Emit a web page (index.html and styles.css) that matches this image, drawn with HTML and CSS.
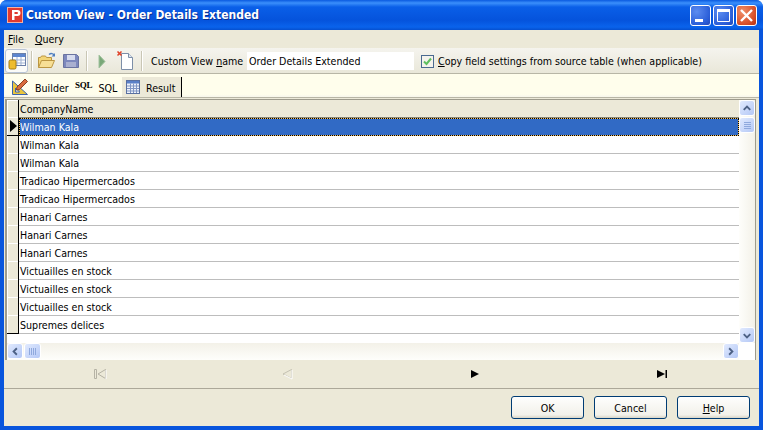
FILE: index.html
```html
<!DOCTYPE html>
<html lang="en">
<head>
<meta charset="utf-8">
<title>Custom View - Order Details Extended</title>
<link rel="stylesheet" href="styles.css">
</head>
<body>
<div class="window">
  <header class="titlebar">
    <svg class="app-icon" width="16" height="16" viewBox="0 0 16 16"><rect x="0.5" y="0.5" width="15" height="15" fill="#e03a30" stroke="#f4b0a0"/><path d="M5 3h5.500a2.500 2.500 0 0 1 0 6H7.500v4H5zM7.500 5v2h2.500a1 1 0 0 0 0-2z" fill="#fff"/></svg>
    <span class="title-text">Custom View - Order Details Extended</span>
    <div class="caption-buttons">
      <span class="cap cap-blue"><svg width="21" height="21" viewBox="0 0 21 21"><rect x="5" y="14" width="8" height="3" fill="#fff"/></svg></span>
      <span class="cap cap-blue"><svg width="21" height="21" viewBox="0 0 21 21"><path d="M4.500 4.500h12v12h-12z" fill="none" stroke="#fff"/><rect x="4" y="4" width="13" height="3" fill="#fff"/></svg></span>
      <span class="cap cap-red"><svg width="21" height="21" viewBox="0 0 21 21"><path d="M5 5l11 11M16 5L5 16" stroke="#fff" stroke-width="2.400"/></svg></span>
    </div>
  </header>
  <div class="client">
    <nav class="menubar"><span class="menu"><u>F</u>ile</span><span class="menu"><u>Q</u>uery</span></nav>
    <div class="toolbar">
      <span class="tool tool-active">
        <svg width="20" height="20" viewBox="0 0 20 20"><rect x="5.500" y="2.500" width="13" height="12" fill="#fff" stroke="#6a7fa8"/><rect x="6" y="3" width="12" height="3" fill="#5d86cf"/><path d="M6 9h12M6 12h12M10 6v8M14 6v8" stroke="#9fb2d2"/><rect x="2" y="9" width="7" height="9" rx="1.500" fill="#eebc2e" stroke="#a67c14"/></svg>
      </span>
      <span class="sep"></span>
      <span class="tool">
        <svg width="20" height="20" viewBox="0 0 20 20"><path d="M1.500 16.500V6.500h2l1-1.500h4l1 1.500h5v3" fill="#f3d576" stroke="#bb9642"/><path d="M1.500 16.500l3-7h13l-3 7z" fill="#f7df95" stroke="#bb9642"/><path d="M12 3.500c2-1.500 4-1 5 .5" fill="none" stroke="#4f7fc0" stroke-width="1.500"/><path d="M18 2v3.500h-3.500z" fill="#4f7fc0"/></svg>
      </span>
      <span class="tool">
        <svg width="20" height="20" viewBox="0 0 20 20"><path d="M2.500 3.500h13l2 2v11h-15z" fill="#7d88bd" stroke="#6a73a0"/><rect x="6" y="4" width="8" height="5" fill="#d7dcef"/><rect x="5" y="11" width="10" height="5" fill="#a9afd0"/></svg>
      </span>
      <span class="sep"></span>
      <span class="tool">
        <svg width="20" height="20" viewBox="0 0 20 20"><path d="M7 4l6 6.500-6 6.500z" fill="#79a878" stroke="#a3c3a0"/></svg>
      </span>
      <span class="tool">
        <svg width="20" height="20" viewBox="0 0 20 20"><path d="M5.500 2.500h7l4 4v12h-11z" fill="#fff" stroke="#7d8fa8"/><path d="M12.500 2.500v4h4" fill="#dfe7f1" stroke="#7d8fa8"/><path d="M1.500 0.500l4 4M5.500 0.500l-4 4" stroke="#e0432a" stroke-width="1.500"/></svg>
      </span>
      <span class="sep sep-last"></span>
      <label class="name-label">Custom View <u>n</u>ame</label>
      <span class="name-field">Order Details Extended</span>
      <span class="check"><svg width="13" height="13" viewBox="0 0 13 13"><path d="M3 6.500l2.500 2.500L10 3.500" fill="none" stroke="#5fbf5f" stroke-width="2"/></svg></span>
      <span class="check-label"><u>C</u>opy field settings from source table (when applicable)</span>
    </div>
    <div class="tabbar">
      <span class="tab tab-builder">
        <svg width="18" height="18" viewBox="0 0 18 18"><path d="M0.500 4v13.500h15z" fill="#e9c53c" stroke="#3a62ad"/><path d="M3.500 11v4h4z" fill="#fff9d8" stroke="#3a62ad"/><path d="M5 10L13 2l2.500 2.500-8 8-3 .5z" fill="#d96b3d" stroke="#8a4022"/></svg>
        <span class="tab-label">Builder</span>
      </span>
      <span class="tab tab-sql"><b class="sql-logo">SQL</b><span class="tab-label">SQL</span></span>
      <span class="tab tab-result">
        <svg width="16" height="16" viewBox="0 0 16 16"><rect x="1.500" y="1.500" width="13" height="13" fill="#eef2fa" stroke="#5a70a0"/><rect x="2" y="2" width="12" height="2.500" fill="#5a80c8"/><path d="M2 7h12M2 9.500h12M2 12h12M5.500 4.500V14M8.500 4.500V14M11.500 4.500V14" stroke="#7f95c4"/></svg>
        <span class="tab-label">Result</span>
      </span>
      <span class="tab-end"></span>
    </div>
    <div class="grid-frame">
      <div class="grid-main">
        <div class="grid-area">
          <div class="row header"><span class="ind"></span><span class="cell">CompanyName</span></div>
          <div class="row selected"><span class="ind"><i class="arrow"></i></span><span class="cell">Wilman Kala</span></div>
          <div class="row"><span class="ind"></span><span class="cell">Wilman Kala</span></div>
          <div class="row"><span class="ind"></span><span class="cell">Wilman Kala</span></div>
          <div class="row"><span class="ind"></span><span class="cell">Tradicao Hipermercados</span></div>
          <div class="row"><span class="ind"></span><span class="cell">Tradicao Hipermercados</span></div>
          <div class="row"><span class="ind"></span><span class="cell">Hanari Carnes</span></div>
          <div class="row"><span class="ind"></span><span class="cell">Hanari Carnes</span></div>
          <div class="row"><span class="ind"></span><span class="cell">Hanari Carnes</span></div>
          <div class="row"><span class="ind"></span><span class="cell">Victuailles en stock</span></div>
          <div class="row"><span class="ind"></span><span class="cell">Victuailles en stock</span></div>
          <div class="row"><span class="ind"></span><span class="cell">Victuailles en stock</span></div>
          <div class="row"><span class="ind"></span><span class="cell">Supremes delices</span></div>
        </div>
        <div class="vscroll">
          <span class="sb-btn"><svg width="15" height="15" viewBox="0 0 15 15"><path d="M4 9l3.500-3.500L11 9" fill="none" stroke="#4d6185" stroke-width="2"/></svg></span>
          <span class="sb-thumb sb-thumb-v"><svg width="9" height="9" viewBox="0 0 9 9"><path d="M1 1.500h7M1 3.500h7M1 5.500h7M1 7.500h7" stroke="#8fa9dd"/></svg></span>
          <span class="sb-fill"></span>
          <span class="sb-btn"><svg width="15" height="15" viewBox="0 0 15 15"><path d="M4 6l3.500 3.500L11 6" fill="none" stroke="#4d6185" stroke-width="2"/></svg></span>
        </div>
      </div>
      <div class="hscroll">
        <span class="sb-btn sb-btn-h"><svg width="15" height="15" viewBox="0 0 15 15"><path d="M9.500 4L6 7.500l3.500 3.500" fill="none" stroke="#4d6185" stroke-width="2"/></svg></span>
        <span class="sb-thumb sb-thumb-h"><svg width="9" height="9" viewBox="0 0 9 9"><path d="M1.500 1v7M3.500 1v7M5.500 1v7M7.500 1v7" stroke="#8fa9dd"/></svg></span>
        <span class="sb-fill"></span>
        <span class="sb-btn sb-btn-h"><svg width="15" height="15" viewBox="0 0 15 15"><path d="M5.500 4L9 7.500 5.500 11" fill="none" stroke="#4d6185" stroke-width="2"/></svg></span>
      </div>
    </div>
    <div class="navigator">
      <svg width="14" height="12" viewBox="0 0 14 12"><path d="M1.500 1.500v9h2v-9zM12.500 1.500v9L5 6z" fill="none" stroke="#b5b2a4"/><path d="M13 2v9" stroke="#fff"/></svg>
      <svg width="14" height="12" viewBox="0 0 14 12"><path d="M11.500 1.500v9L3 6z" fill="none" stroke="#c4c1b2"/><path d="M12 2v9M4 7l8 4" stroke="#fff"/></svg>
      <svg width="14" height="12" viewBox="0 0 14 12"><path d="M3 2l8 4-8 4z" fill="#000"/></svg>
      <svg width="14" height="12" viewBox="0 0 14 12"><path d="M2 2l8 4-8 4zM10.500 2h1.500v8h-1.500z" fill="#000"/></svg>
    </div>
    <footer class="actions">
      <button class="btn">OK</button>
      <button class="btn">Cancel</button>
      <button class="btn"><u>H</u>elp</button>
    </footer>
  </div>
</div>
</body>
</html>
```

FILE: styles.css
```css
html, body { margin: 0; padding: 0; background: #fff; }
body { width: 763px; height: 430px; overflow: hidden; font: 10.600px "DejaVu Sans Condensed", "DejaVu Sans", sans-serif; font-stretch: condensed; color: #000; }
.window {
  width: 763px; height: 430px; box-sizing: border-box; display: flex; flex-direction: column;
  background: #0855dd; border-radius: 7px 7px 0 0; overflow: hidden;
}
.titlebar {
  height: 30px; flex: none; display: flex; align-items: center; box-sizing: border-box; padding: 0 6px 0 7px;
  background: linear-gradient(to bottom, #0a5ae0 0, #3b8ffb 3px, #0a5fe8 7px, #0553dc 20px, #0a63ec 27px, #0550d0 30px);
}
.app-icon { flex: none; margin-right: 3px; }
.title-text { font: bold 12px "DejaVu Sans Condensed", "DejaVu Sans", sans-serif; font-stretch: condensed; color: #fff; text-shadow: 1px 1px 0 #0a2f8f; white-space: nowrap; }
.caption-buttons { margin-left: auto; display: flex; gap: 2px; }
.cap { width: 21px; height: 21px; box-sizing: border-box; border: 1px solid #fff; border-radius: 3px; display: block; overflow: hidden; }
.cap svg { display: block; margin: -1px; }
.cap-blue { background: radial-gradient(circle at 30% 30%, #5c8cf0, #2a5ed8 70%, #2348b8); }
.cap-red { background: radial-gradient(circle at 30% 30%, #f0906a, #d8502a 65%, #b83010); }
.client { flex: 1; min-height: 0; margin: 0 4px 4px; background: #ece9d8; display: flex; flex-direction: column; }
.menubar { height: 18px; flex: none; display: flex; align-items: center; gap: 11px; padding-left: 4px; }
.toolbar {
  height: 26px; flex: none; display: flex; align-items: center; box-sizing: border-box; padding: 1px 0 0 1px; white-space: nowrap;
  background: linear-gradient(to bottom, #f5f4ee, #e9e7d9);
  border-bottom: 1px solid #b8b6a6;
}
.tool { width: 24px; height: 22px; display: flex; align-items: center; justify-content: center; flex: none; }
.tool-active { width: 23px; height: 24px; box-sizing: border-box; border: 1px solid #b9c5d6; border-radius: 3px; background: #fbfbf8; }
.sep { width: 1px; height: 20px; background: #c9c6b5; box-shadow: 1px 0 0 #fff; margin: 0 3px; flex: none; }
.sep-last { margin-right: 9px; }
.name-label { margin-right: 6px; width: 90px; flex: none; }
.name-field { width: 167px; height: 18px; padding-left: 2px; background: #fff; line-height: 18px; box-sizing: border-box; flex: none; }
.check { width: 13px; height: 13px; margin-left: 7px; box-sizing: border-box; border: 1px solid #4a6a90; background: #f4f3ec; flex: none; display: block; }
.check svg { display: block; margin: -1px; }
.check-label { margin-left: 4px; }
.tabbar { height: 24px; flex: none; display: flex; align-items: stretch; background: linear-gradient(to bottom, #fffeec 88%, #f7f6ec); border-bottom: 1px solid #b8b6a6; box-sizing: border-box; padding-left: 8px; }
.tab { display: flex; align-items: center; gap: 5px; padding: 0; box-sizing: border-box; }
.tab-label { margin-top: 4px; }
.tab-builder { width: 63px; }
.tab-sql { width: 47px; gap: 6px; }
.tab-result { width: 59px; background: #ece9d8; padding: 0 0 0 3px; gap: 5px; height: 20px; margin-top: 3px; }
.tab-result .tab-label { margin-top: 2px; }
.tab-end { width: 1px; background: #000; height: 20px; margin-top: 3px; }
.sql-logo { font: bold 9px "Liberation Serif", serif; letter-spacing: -.2px; align-self: flex-start; margin-top: 6px; }
.grid-frame { height: 261px; flex: none; margin: 1px 3px 0 1px; box-sizing: border-box; border: 1px solid #9d9b8d; border-width: 1px 1px 0 2px; background: #fff; display: flex; flex-direction: column; }
.grid-main { flex: 1; min-height: 0; display: flex; }
.grid-area { flex: 1; min-width: 0; overflow: hidden; background: #fff; }
.row { height: 18px; display: flex; box-sizing: border-box; border-bottom: 1px solid #bdbdbd; line-height: 18px; }
.ind { width: 11px; height: 18px; flex: none; box-sizing: content-box; background: #ece9d8; border-right: 1px solid #000; border-bottom: 1px solid #000; box-shadow: inset 1px 1px 0 #fff; display: flex; align-items: center; justify-content: center; margin-top: -1px; }
.cell { padding-left: 1px; }
.header { background: #ece9d8; border-bottom-color: #8a8878; }
.header .ind { margin-top: 0; height: 17px; }
.selected { background: #316ac5; color: #fff; position: relative; }
.selected .cell { flex: 1; outline: 1px dotted #000; outline-offset: -1px; box-shadow: inset 0 0 0 1px #f5c060; margin-bottom: -1px; }
.arrow { display: block; width: 0; height: 0; border-left: 7px solid #000; border-top: 6px solid transparent; border-bottom: 6px solid transparent; margin-left: 2px; }
.vscroll { width: 16px; flex: none; display: flex; flex-direction: column; background: linear-gradient(to right, #fefefb, #f3f1e8); }
.hscroll { height: 17px; flex: none; display: flex; background: linear-gradient(to bottom, #f3f1e8, #fefefb); margin-right: 16px; }
.sb-fill { flex: 1; }
.sb-btn, .sb-thumb { display: flex; align-items: center; justify-content: center; flex: none; box-sizing: border-box; border: 1px solid #fff; border-radius: 3px; background: linear-gradient(135deg, #e1eafe, #b4c8f6); }
.sb-btn { width: 16px; height: 16px; }
.sb-thumb-v { width: 16px; height: 16px; margin-top: 1px; }
.sb-thumb-h { width: 17px; height: 16px; margin-left: 1px; }
.navigator { height: 29px; flex: none; box-sizing: border-box; border-bottom: 1px solid #aca899; display: flex; align-items: center; justify-content: space-between; padding: 0 90px 0 89px; }
.actions { flex: 1; display: flex; justify-content: flex-end; align-items: center; gap: 10px; padding: 0 9px 0 0; }
.btn { width: 73px; height: 23px; padding: 0; font: 10.600px "DejaVu Sans Condensed", "DejaVu Sans", sans-serif; font-stretch: condensed; color: #000; border: 1px solid #003c74; border-radius: 3px; background: linear-gradient(to bottom, #fefefd, #f2f1ea 85%, #d9d5c6); }
```
